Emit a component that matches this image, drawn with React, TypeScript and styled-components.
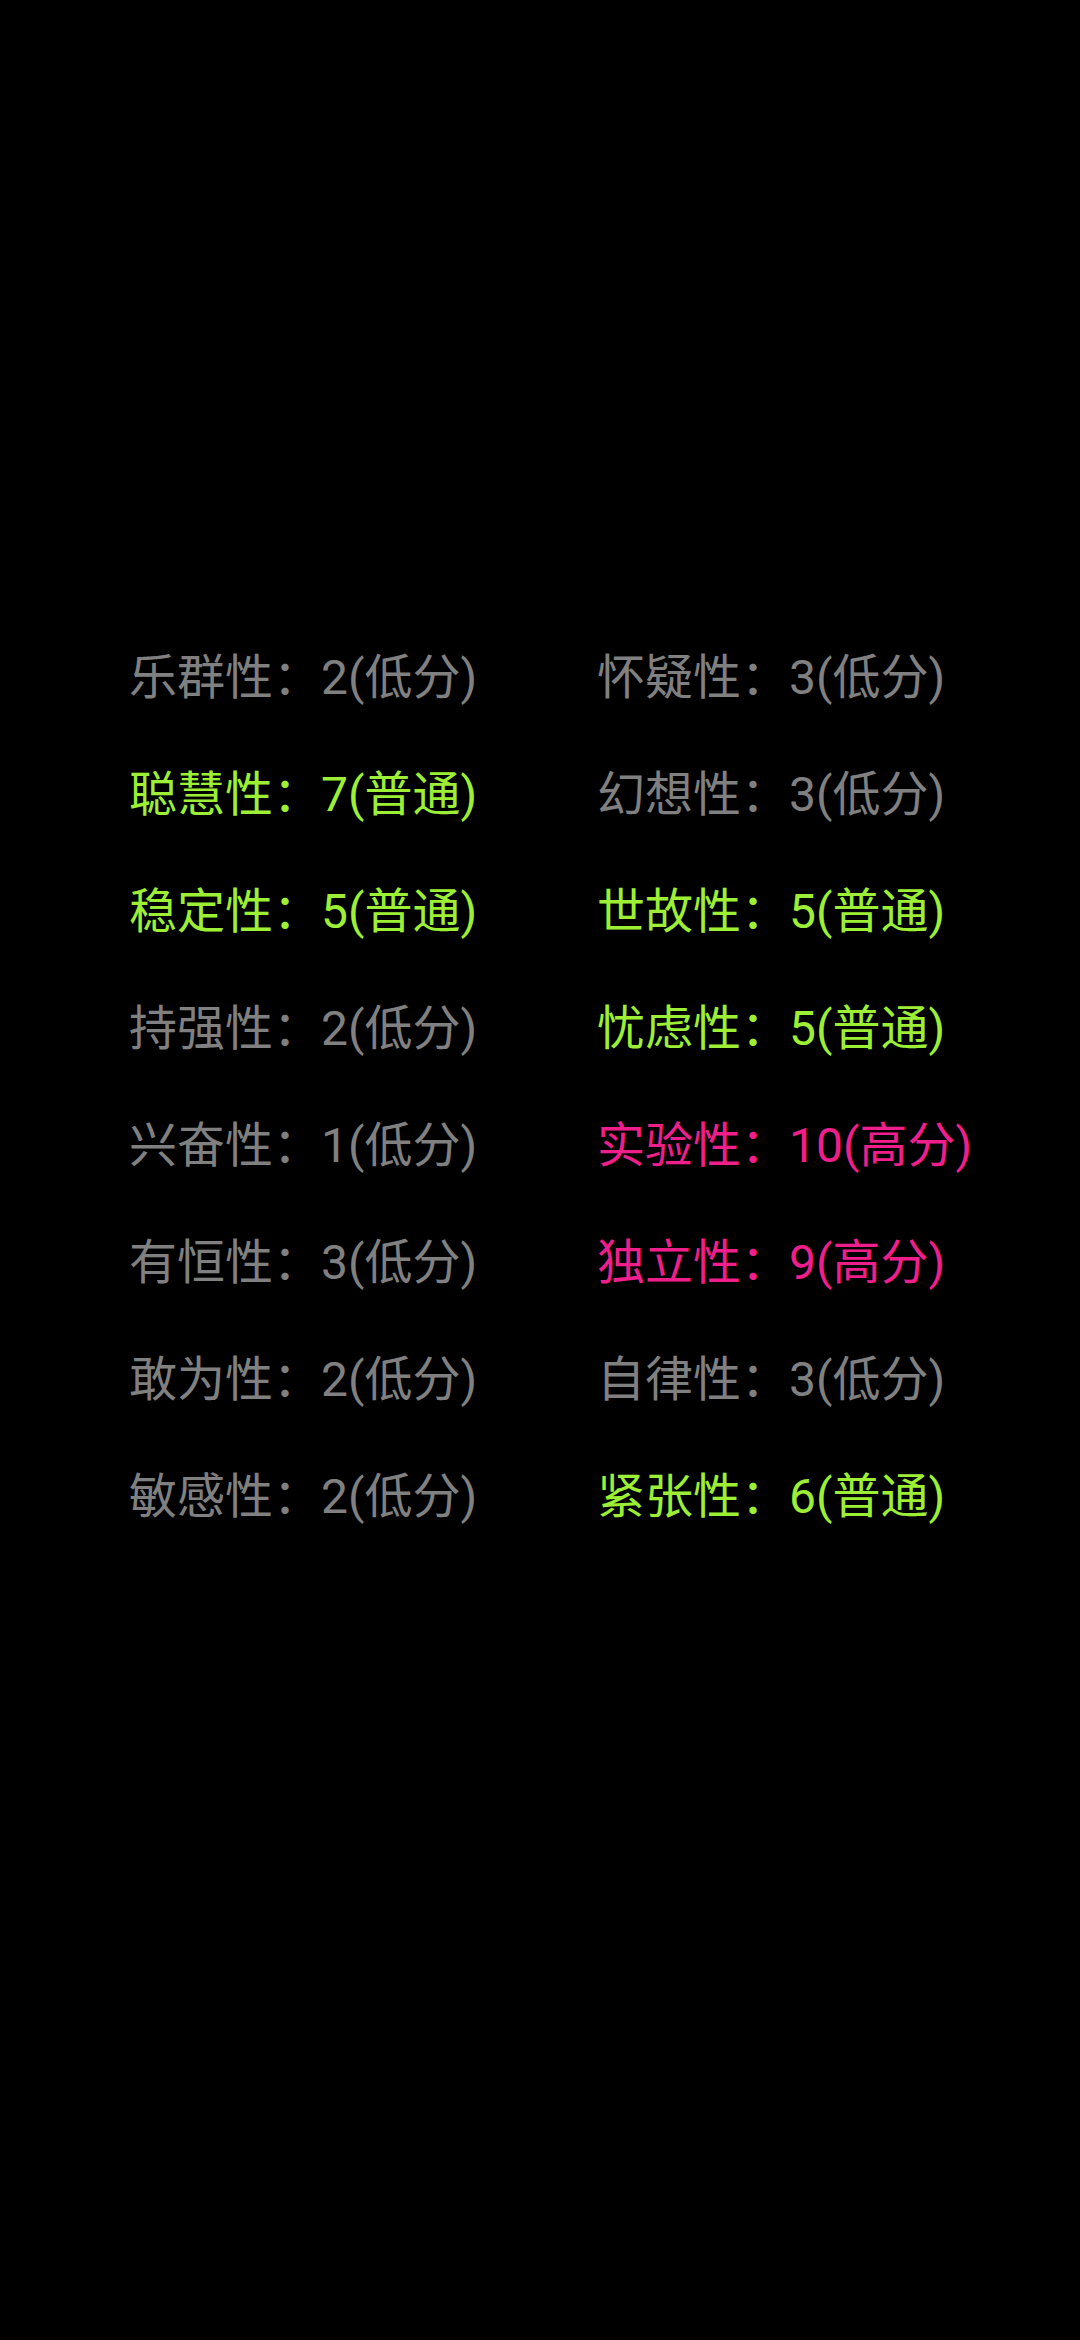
import React from "react";
import styled, { createGlobalStyle } from "styled-components";

const Global = createGlobalStyle`
  html, body { margin: 0; padding: 0; background: #000; }
  body { min-height: 2340px; }
`;

const Page = styled.div`
  width: 1080px;
  min-height: 2340px;
  background: #000;
  box-sizing: border-box;
  padding: 619px 0 0 129px;
`;

const Grid = styled.div`
  display: grid;
  grid-template-columns: 468px 468px;
  grid-auto-rows: 117px;
`;

type Level = "low" | "mid" | "high";

const colors: Record<Level, string> = {
  low: "#808080",
  mid: "#9cef34",
  high: "#ee1f8b",
};

const Item = styled.div<{ $level: Level }>`
  font-family: Roboto, "Noto Sans CJK SC", sans-serif;
  font-size: 48px;
  line-height: 117px;
  white-space: nowrap;
  color: ${(p) => colors[p.$level]};
`;

const label: Record<Level, string> = { low: "低分", mid: "普通", high: "高分" };

const data: [string, number, Level][] = [
  ["乐群性", 2, "low"],
  ["怀疑性", 3, "low"],
  ["聪慧性", 7, "mid"],
  ["幻想性", 3, "low"],
  ["稳定性", 5, "mid"],
  ["世故性", 5, "mid"],
  ["持强性", 2, "low"],
  ["忧虑性", 5, "mid"],
  ["兴奋性", 1, "low"],
  ["实验性", 10, "high"],
  ["有恒性", 3, "low"],
  ["独立性", 9, "high"],
  ["敢为性", 2, "low"],
  ["自律性", 3, "low"],
  ["敏感性", 2, "low"],
  ["紧张性", 6, "mid"],
];

export default function App() {
  return (
    <>
      <Global />
      <Page>
        <Grid>
          {data.map(([name, score, level]) => (
            <Item key={name} $level={level}>
              {name}：{score}({label[level]})
            </Item>
          ))}
        </Grid>
      </Page>
    </>
  );
}
